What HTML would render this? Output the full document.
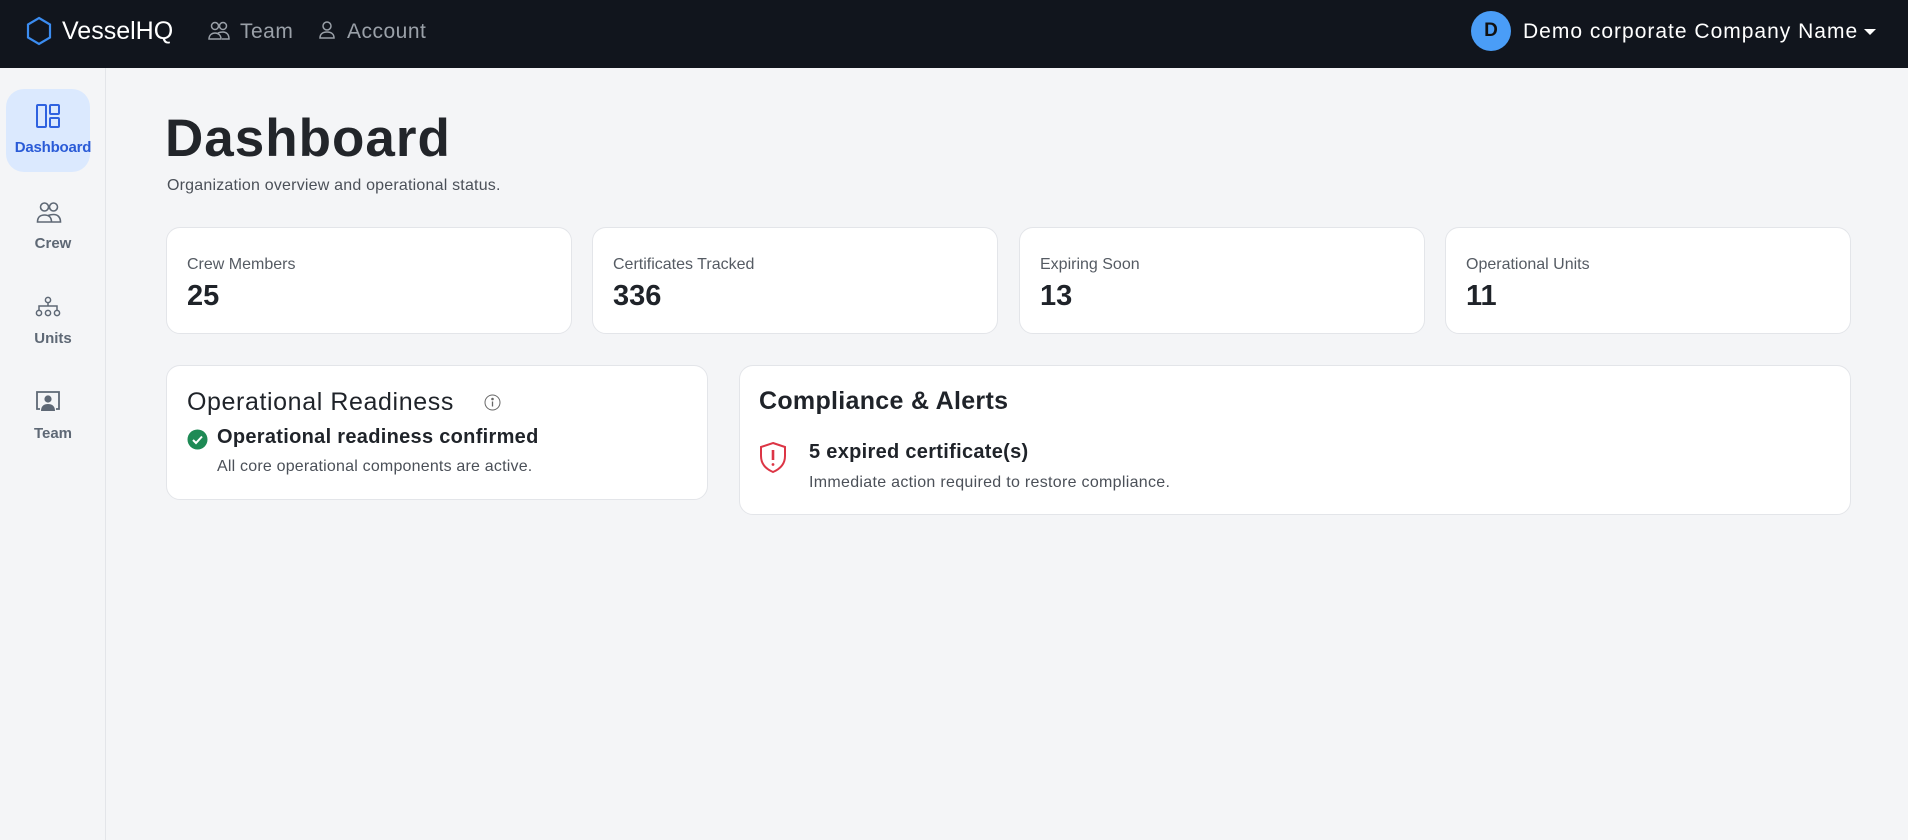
<!DOCTYPE html>
<html><head><meta charset="utf-8"><style>
*{box-sizing:border-box;margin:0;padding:0}
body{width:1908px;height:840px;background:#f4f5f7;font-family:"Liberation Sans",sans-serif;position:relative;overflow:hidden;color:#1f2329}
.a{position:absolute;white-space:nowrap}
.top{position:absolute;left:0;top:0;width:1908px;height:68px;background:#11151d}
.side{position:absolute;left:0;top:68px;width:106px;height:772px;background:#f4f5f7;border-right:1px solid #e3e5e9}
.card{position:absolute;background:#fff;border:1px solid #e3e5e9;border-radius:14px}
.lbl{font-size:16px;color:#555b63}
.num{font-size:29px;font-weight:bold;color:#1f2329}
.sl{font-size:15px;font-weight:bold;color:#5e6875;width:106px;text-align:center;left:0}
</style></head><body>
<div class="top"></div>
<svg class="a" style="left:26px;top:16px" width="26" height="30" viewBox="0 0 26 30"><path d="M13 2 L24 8.5 V21.5 L13 28 L2 21.5 V8.5 Z" fill="none" stroke="#3b8cf0" stroke-width="2.2"/></svg>
<div class="a" style="left:62px;top:17px;font-size:25px;color:#fff">VesselHQ</div>
<svg class="a" style="left:208px;top:21px" width="22" height="20" viewBox="0 0 22 20" fill="none" stroke="#9aa0a8" stroke-width="1.5"><circle cx="7" cy="5" r="3.5"/><circle cx="15" cy="5" r="3.5"/><path d="M1 18c0-4 3-6 6-6s6 2 6 6zM10 12c1-.5 3-1 5-1 3 0 6 2 6 7h-7"/></svg>
<div class="a" style="left:240px;top:20px;font-size:21px;color:#9aa0a8;letter-spacing:0.5px">Team</div>
<svg class="a" style="left:318px;top:20px" width="18" height="20" viewBox="0 0 18 20" fill="none" stroke="#9aa0a8" stroke-width="1.5"><circle cx="9" cy="6" r="4"/><path d="M2 18c0-4 3-6 7-6s7 2 7 6z"/></svg>
<div class="a" style="left:347px;top:20px;font-size:21px;color:#9aa0a8;letter-spacing:0.5px">Account</div>
<div class="a" style="left:1471px;top:11px;width:40px;height:40px;border-radius:50%;background:#4a9df7;color:#111;font-weight:bold;font-size:19px;text-align:center;line-height:40px">D</div>
<div class="a" style="left:1523px;top:20px;font-size:21px;color:#fff;letter-spacing:1px">Demo corporate Company Name</div>
<div class="a" style="left:1864px;top:29px;width:0;height:0;border-left:6px solid transparent;border-right:6px solid transparent;border-top:6px solid #fff"></div>

<div class="side"></div>
<div class="a" style="left:6px;top:89px;width:84px;height:83px;background:#dbe9fe;border-radius:18px"></div>
<svg class="a" style="left:35px;top:103px" width="26" height="26" viewBox="0 0 26 26" fill="none" stroke="#2f62e0" stroke-width="2"><rect x="2" y="2" width="9" height="22" rx="1"/><rect x="15" y="2" width="9" height="9" rx="1"/><rect x="15" y="15" width="9" height="9" rx="1"/></svg>
<div class="a sl" style="top:139px;color:#2a5bd7;font-size:15px;letter-spacing:-0.2px">Dashboard</div>
<svg class="a" style="left:36px;top:202px" width="26" height="22" viewBox="0 0 26 22" fill="none" stroke="#5e6875" stroke-width="1.6"><circle cx="8.5" cy="5" r="4"/><circle cx="17.5" cy="5" r="4"/><path d="M1.5 20c0-5 3-7 7-7s7 2 7 7zM12 13.5c1.5-.5 3-1 5.5-1 4 0 7 2.5 7 7.5h-9"/></svg>
<div class="a sl" style="top:235px">Crew</div>
<svg class="a" style="left:35px;top:296px" width="26" height="22" viewBox="0 0 26 22" fill="none" stroke="#5e6875" stroke-width="1.5"><circle cx="13" cy="4" r="2.6"/><path d="M13 6.6V10M4 14V10h18v4"/><circle cx="4" cy="17" r="2.6"/><circle cx="13" cy="17" r="2.6"/><circle cx="22" cy="17" r="2.6"/></svg>
<div class="a sl" style="top:330px">Units</div>
<svg class="a" style="left:35px;top:390px" width="26" height="24" viewBox="0 0 26 24"><path d="M5 19H2V2h22v17h-3" fill="none" stroke="#5e6875" stroke-width="1.8"/><circle cx="13" cy="9" r="3.6" fill="#5e6875"/><path d="M6 21c0-5 3-7 7-7s7 2 7 7z" fill="#5e6875"/></svg>
<div class="a sl" style="top:425px">Team</div>

<div class="a" style="left:165px;top:108px;font-size:53px;font-weight:bold;color:#22252a;letter-spacing:1px">Dashboard</div>
<div class="a" style="left:167px;top:177px;font-size:16px;color:#4b5058;letter-spacing:0.2px">Organization overview and operational status.</div>

<div class="card" style="left:166px;top:227px;width:406px;height:107px"></div>
<div class="card" style="left:592px;top:227px;width:406px;height:107px"></div>
<div class="card" style="left:1019px;top:227px;width:406px;height:107px"></div>
<div class="card" style="left:1445px;top:227px;width:406px;height:107px"></div>
<div class="a lbl" style="left:187px;top:256px">Crew Members</div><div class="a num" style="left:187px;top:280px">25</div>
<div class="a lbl" style="left:613px;top:256px">Certificates Tracked</div><div class="a num" style="left:613px;top:280px">336</div>
<div class="a lbl" style="left:1040px;top:256px">Expiring Soon</div><div class="a num" style="left:1040px;top:280px">13</div>
<div class="a lbl" style="left:1466px;top:256px">Operational Units</div><div class="a num" style="left:1466px;top:280px">11</div>

<div class="card" style="left:166px;top:365px;width:542px;height:135px"></div>
<div class="a" style="left:187px;top:388px;font-size:25px;color:#1f2329;letter-spacing:0.6px">Operational Readiness</div>
<svg class="a" style="left:484px;top:394px" width="17" height="17" viewBox="0 0 17 17" fill="none" stroke="#666" stroke-width="1"><circle cx="8.5" cy="8.5" r="7.5"/><path d="M8.5 7.5v5" stroke-width="1.3"/><circle cx="8.5" cy="5" r=".8" fill="#666"/></svg>
<svg class="a" style="left:187px;top:429px" width="21" height="21" viewBox="0 0 21 21"><circle cx="10.5" cy="10.5" r="10" fill="#1e8a55"/><path d="M6 11l3 3 6-6.5" fill="none" stroke="#fff" stroke-width="2"/></svg>
<div class="a" style="left:217px;top:426px;font-size:20px;font-weight:bold;color:#1f2329;letter-spacing:0.3px">Operational readiness confirmed</div>
<div class="a" style="left:217px;top:458px;font-size:16px;color:#4b5058;letter-spacing:0.2px">All core operational components are active.</div>

<div class="card" style="left:739px;top:365px;width:1112px;height:150px"></div>
<div class="a" style="left:759px;top:387px;font-size:25px;font-weight:bold;color:#1f2329;letter-spacing:0.3px">Compliance &amp; Alerts</div>
<svg class="a" style="left:759px;top:441px" width="28" height="33" viewBox="0 0 28 33" fill="none" stroke="#dc3545" stroke-width="2"><path d="M14 2 L26 6 V15 C26 23 21 28 14 31 C7 28 2 23 2 15 V6 Z"/><path d="M14 9v10" stroke-width="2.6"/><circle cx="14" cy="23.5" r="1.4" fill="#dc3545" stroke="none"/></svg>
<div class="a" style="left:809px;top:441px;font-size:20px;font-weight:bold;color:#1f2329;letter-spacing:0.3px">5 expired certificate(s)</div>
<div class="a" style="left:809px;top:474px;font-size:16px;color:#4b5058;letter-spacing:0.3px">Immediate action required to restore compliance.</div>
</body></html>
